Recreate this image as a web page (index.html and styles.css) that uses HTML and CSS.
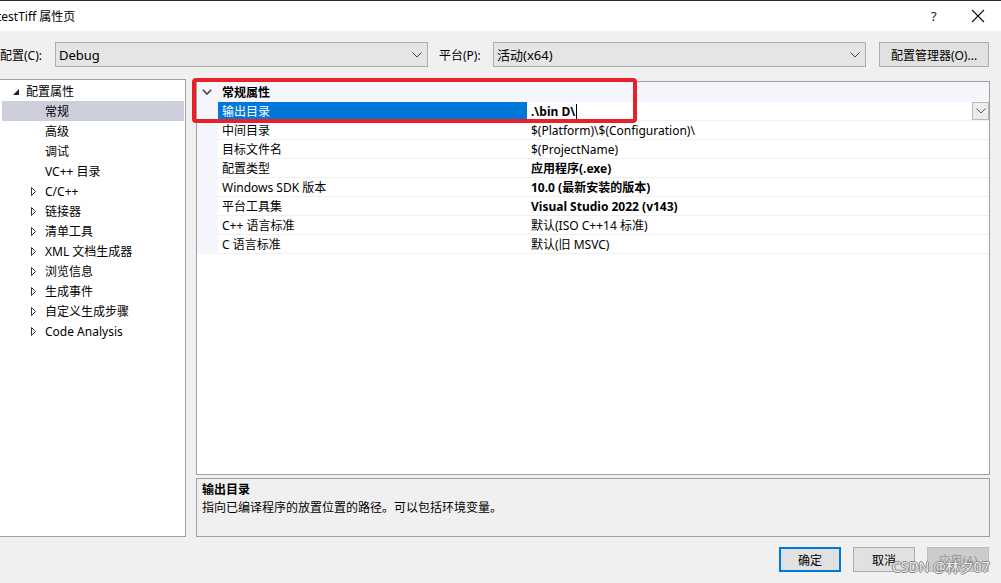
FILE: index.html
```html
<!DOCTYPE html>
<html lang="zh-CN">
<head>
    <meta charset="UTF-8">
    <title>testTiff 属性页</title>
    <link rel="stylesheet" href="styles.css">
</head>
<body>
<div class="window">
    <div class="titlebar">
        <span class="title">testTiff 属性页</span>
        <span class="help">?</span>
        <span class="close">
            <svg width="14" height="14" viewBox="0 0 14 14"><path d="M1 1 L13 13 M13 1 L1 13" stroke="#111" stroke-width="1.1" fill="none"/></svg>
        </span>
    </div>

    <div class="toolbar">
        <span class="lbl lbl-config">配置(C):</span>
        <div class="combo">
            <span>Debug</span>
            <svg class="chev" width="10" height="6" viewBox="0 0 10 6"><path d="M0.5 0.5 L5 5 L9.5 0.5" stroke="#444" fill="none"/></svg>
        </div>
        <span class="lbl lbl-platform">平台(P):</span>
        <div class="combo">
            <span>活动(x64)</span>
            <svg class="chev" width="10" height="6" viewBox="0 0 10 6"><path d="M0.5 0.5 L5 5 L9.5 0.5" stroke="#444" fill="none"/></svg>
        </div>
        <div class="btn btn-manager">配置管理器(O)...</div>
    </div>

    <div class="main">
        <div class="tree">
            <div class="tree-item lvl0">
                <svg class="tri" width="6" height="6" viewBox="0 0 6 6"><path d="M6 0 L6 6 L0 6 Z" fill="#222"/></svg>
                <span>配置属性</span>
            </div>
            <div class="tree-item lvl1 selected"><span>常规</span></div>
            <div class="tree-item lvl1"><span>高级</span></div>
            <div class="tree-item lvl1"><span>调试</span></div>
            <div class="tree-item lvl1"><span>VC++ 目录</span></div>
            <div class="tree-item lvl1 has-kids"><svg class="tri" width="5" height="9" viewBox="0 0 5 9"><path d="M0.5 0.5 L4.5 4.5 L0.5 8.5 Z" stroke="#333" fill="none"/></svg><span>C/C++</span></div>
            <div class="tree-item lvl1 has-kids"><svg class="tri" width="5" height="9" viewBox="0 0 5 9"><path d="M0.5 0.5 L4.5 4.5 L0.5 8.5 Z" stroke="#333" fill="none"/></svg><span>链接器</span></div>
            <div class="tree-item lvl1 has-kids"><svg class="tri" width="5" height="9" viewBox="0 0 5 9"><path d="M0.5 0.5 L4.5 4.5 L0.5 8.5 Z" stroke="#333" fill="none"/></svg><span>清单工具</span></div>
            <div class="tree-item lvl1 has-kids"><svg class="tri" width="5" height="9" viewBox="0 0 5 9"><path d="M0.5 0.5 L4.5 4.5 L0.5 8.5 Z" stroke="#333" fill="none"/></svg><span>XML 文档生成器</span></div>
            <div class="tree-item lvl1 has-kids"><svg class="tri" width="5" height="9" viewBox="0 0 5 9"><path d="M0.5 0.5 L4.5 4.5 L0.5 8.5 Z" stroke="#333" fill="none"/></svg><span>浏览信息</span></div>
            <div class="tree-item lvl1 has-kids"><svg class="tri" width="5" height="9" viewBox="0 0 5 9"><path d="M0.5 0.5 L4.5 4.5 L0.5 8.5 Z" stroke="#333" fill="none"/></svg><span>生成事件</span></div>
            <div class="tree-item lvl1 has-kids"><svg class="tri" width="5" height="9" viewBox="0 0 5 9"><path d="M0.5 0.5 L4.5 4.5 L0.5 8.5 Z" stroke="#333" fill="none"/></svg><span>自定义生成步骤</span></div>
            <div class="tree-item lvl1 has-kids"><svg class="tri" width="5" height="9" viewBox="0 0 5 9"><path d="M0.5 0.5 L4.5 4.5 L0.5 8.5 Z" stroke="#333" fill="none"/></svg><span>Code Analysis</span></div>
        </div>

        <div class="right">
            <div class="grid">
                <div class="cat-row">
                    <svg class="cat-chev" width="10" height="6" viewBox="0 0 10 6"><path d="M0.8 0.8 L5 5 L9.2 0.8" stroke="#444" stroke-width="1.6" fill="none"/></svg>
                    <span class="cat-name">常规属性</span>
                </div>
                <div class="prop-row">
                    <div class="gutter"></div>
                    <div class="name active">输出目录</div>
                    <div class="value bold">.\bin D\<span class="caret"></span>
                        <div class="drop"><svg width="10" height="6" viewBox="0 0 10 6"><path d="M0.5 0.5 L5 5 L9.5 0.5" stroke="#555" fill="none"/></svg></div>
                    </div>
                </div>
                <div class="prop-row">
                    <div class="gutter"></div>
                    <div class="name">中间目录</div>
                    <div class="value">$(Platform)\$(Configuration)\</div>
                </div>
                <div class="prop-row">
                    <div class="gutter"></div>
                    <div class="name">目标文件名</div>
                    <div class="value">$(ProjectName)</div>
                </div>
                <div class="prop-row">
                    <div class="gutter"></div>
                    <div class="name">配置类型</div>
                    <div class="value bold">应用程序(.exe)</div>
                </div>
                <div class="prop-row">
                    <div class="gutter"></div>
                    <div class="name">Windows SDK 版本</div>
                    <div class="value bold">10.0 (最新安装的版本)</div>
                </div>
                <div class="prop-row">
                    <div class="gutter"></div>
                    <div class="name">平台工具集</div>
                    <div class="value bold">Visual Studio 2022 (v143)</div>
                </div>
                <div class="prop-row">
                    <div class="gutter"></div>
                    <div class="name">C++ 语言标准</div>
                    <div class="value">默认(ISO C++14 标准)</div>
                </div>
                <div class="prop-row">
                    <div class="gutter"></div>
                    <div class="name">C 语言标准</div>
                    <div class="value">默认(旧 MSVC)</div>
                </div>
            </div>
            <div class="desc">
                <div class="desc-title">输出目录</div>
                <div class="desc-text">指向已编译程序的放置位置的路径。可以包括环境变量。</div>
            </div>
        </div>
    </div>

    <div class="buttons">
        <div class="btn btn-ok">确定</div>
        <div class="btn">取消</div>
        <div class="btn btn-disabled">应用(A)</div>
    </div>

    <div class="highlight"></div>
    <div class="watermark">CSDN @林夕07</div>
</div>
</body>
</html>
```

FILE: styles.css
```css
body {
    margin: 0;
    width: 1001px;
    height: 583px;
    overflow: hidden;
    background-color: #f0f0f0;
    font-family: "Noto Sans", "Noto Sans CJK SC", sans-serif;
    font-size: 12px;
    color: #000;
}
.window {
    position: relative;
    width: 1001px;
    height: 583px;
}
.titlebar {
    height: 30px;
    background-color: #fff;
    border-top: 1px solid #2b2b2b;
    display: flex;
    align-items: center;
}
.title {
    margin-left: -3px;
    font-size: 12px;
    flex: 1;
}
.help {
    width: 14px;
    margin-right: 26px;
    font-size: 13px;
    color: #222;
}
.close {
    width: 14px;
    height: 14px;
    margin-right: 16px;
    display: flex;
}
.toolbar {
    display: flex;
    align-items: center;
    height: 25px;
    margin-top: 11px;
}
.lbl-config {
    width: 55px;
}
.lbl-platform {
    width: 54px;
    margin-left: 11px;
}
.combo {
    width: 373px;
    height: 25px;
    box-sizing: border-box;
    border: 1px solid #adadad;
    background-color: #e5e5e5;
    display: flex;
    align-items: center;
    padding-left: 3px;
    padding-right: 5px;
}
.combo span {
    flex: 1;
    font-size: 13px;
}
.btn {
    width: 62px;
    height: 25px;
    box-sizing: border-box;
    border: 1px solid #adadad;
    background-color: #e1e1e1;
    display: flex;
    align-items: center;
    justify-content: center;
}
.btn-manager {
    width: 110px;
    margin-left: 13px;
}
.main {
    display: flex;
    margin-top: 12px;
    height: 458px;
}
.tree {
    width: 186px;
    box-sizing: border-box;
    border: 1px solid #a0a0a0;
    border-left: none;
    background-color: #fff;
    padding: 1px 1px 0 2px;
}
.tree-item {
    height: 20px;
    display: flex;
    align-items: center;
    white-space: nowrap;
}
.tree-item.lvl0 {
    padding-left: 11px;
}
.tree-item.lvl0 .tri {
    margin-right: 7px;
    margin-top: 2px;
}
.tree-item.lvl1 {
    padding-left: 43px;
}
.tree-item.has-kids {
    padding-left: 29px;
}
.tree-item.has-kids .tri {
    margin-right: 9px;
}
.tree-item.selected {
    background-color: #cccedb;
}
.right {
    margin-left: 10px;
    width: 794px;
    display: flex;
    flex-direction: column;
}
.grid {
    margin-top: 2px;
    height: 395px;
    box-sizing: border-box;
    border: 1px solid #a0a0a0;
    background-color: #fff;
}
.cat-row {
    height: 20px;
    background-color: #f4f6fb;
    display: flex;
    align-items: center;
}
.cat-chev {
    margin-left: 5px;
    margin-right: 10px;
}
.cat-name {
    font-weight: bold;
}
.prop-row {
    height: 19px;
    display: flex;
}
.gutter {
    width: 21px;
    background-color: #f4f6fb;
}
.name, .value {
    box-sizing: border-box;
    border-bottom: 1px solid #f0f0f0;
    padding-left: 4px;
    display: flex;
    align-items: center;
    white-space: nowrap;
}
.name {
    width: 309px;
}
.name.active {
    background-color: #0078d7;
    color: #fff;
    border-bottom-color: #0078d7;
}
.value {
    flex: 1;
    position: relative;
}
.bold {
    font-weight: bold;
}
.caret {
    display: inline-block;
    width: 1px;
    height: 15px;
    background-color: #000;
    margin-left: 1px;
}
.drop {
    position: absolute;
    right: 0;
    top: 0;
    width: 17px;
    height: 18px;
    box-sizing: border-box;
    border: 1px solid #b9b9b9;
    background-color: #ececec;
    display: flex;
    align-items: center;
    justify-content: center;
}
.desc {
    margin-top: 3px;
    height: 59px;
    box-sizing: border-box;
    border: 1px solid #a0a0a0;
    padding: 2px 5px;
    line-height: 18px;
}
.desc-title {
    font-weight: bold;
}
.buttons {
    display: flex;
    justify-content: flex-end;
    gap: 12px;
    margin-top: 10px;
    padding-right: 12px;
}
.btn-ok {
    border: 2px solid #0078d7;
}
.btn-disabled {
    background-color: #cccccc;
    border-color: #bfbfbf;
    color: #9a9a9a;
}
.highlight {
    position: absolute;
    left: 192px;
    top: 78px;
    width: 445px;
    height: 45px;
    box-sizing: border-box;
    border: 4px solid #e8202a;
    border-radius: 4px;
}
.watermark {
    position: absolute;
    left: 892px;
    top: 556px;
    font-size: 14px;
    color: rgba(255, 255, 255, 0.85);
    text-shadow: 1px 0 0 #8a8a8a, -1px 0 0 #8a8a8a, 0 1px 0 #8a8a8a, 0 -1px 0 #8a8a8a;
}
```
